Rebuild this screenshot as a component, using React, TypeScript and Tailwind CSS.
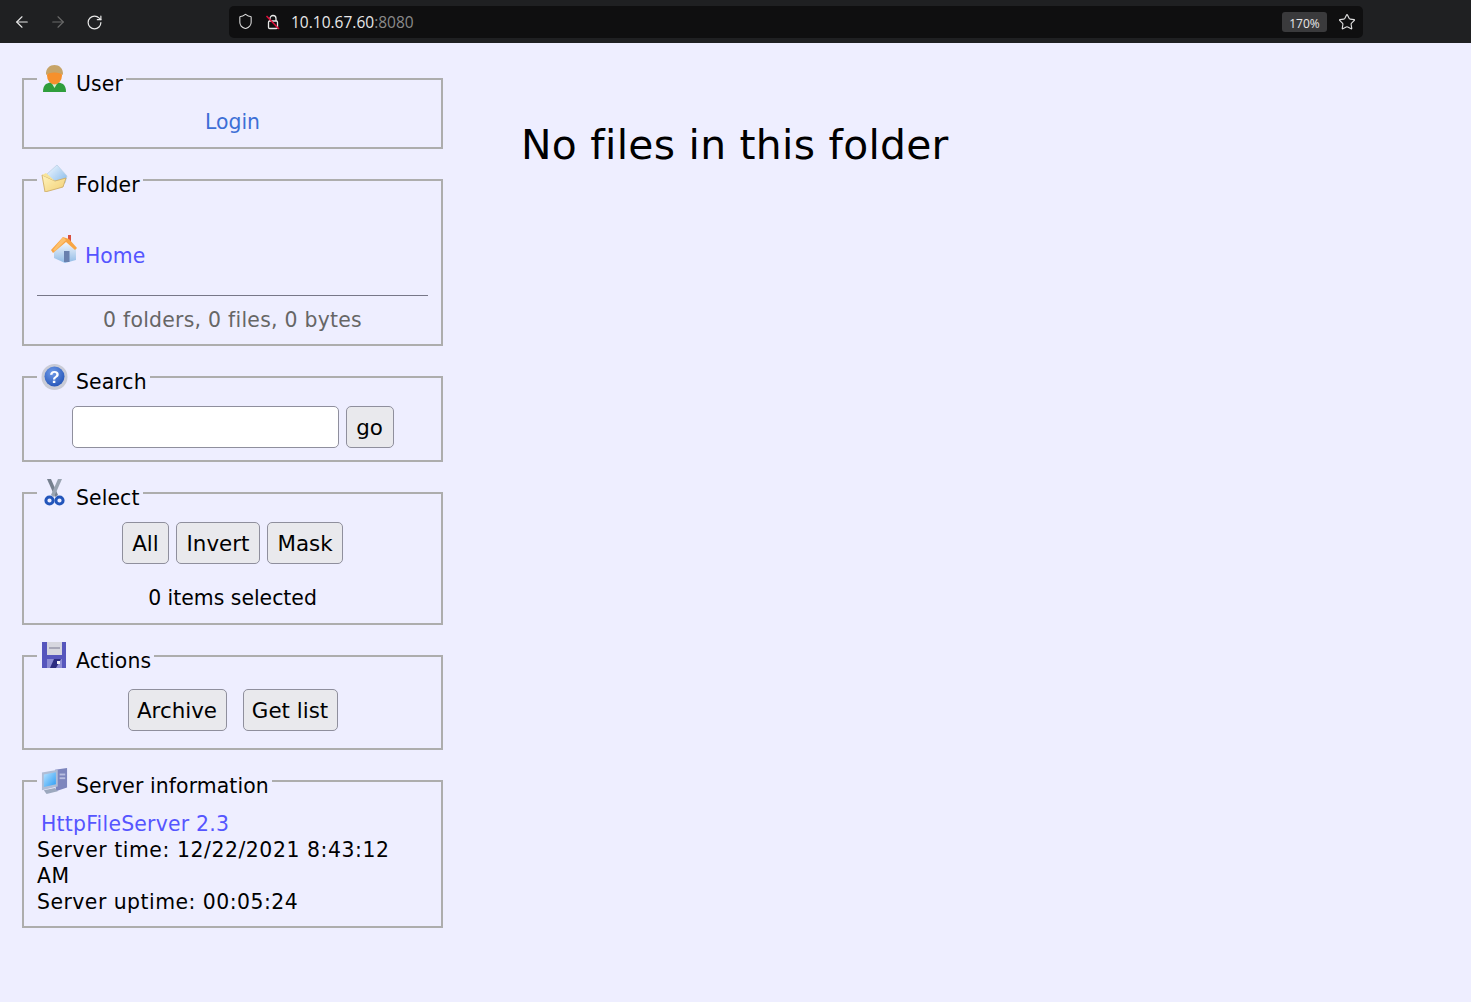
import type { PropsWithChildren, ReactNode } from "react"
import { ArrowLeft, ArrowRight, RotateCw, Shield, Star } from "lucide-react"

const UserIcon = () => (
  <svg width="27" height="28" viewBox="0 0 27 28" className="blur-[0.4px]">
    <path d="M2 27 C2 20 5 18.5 9 17.5 H18 C22 18.5 25 20 25 27 Z" fill="#2f9e3c" />
    <path d="M10 17 L13.5 23 L17 17 Z" fill="#d5ecd0" />
    <ellipse cx="13.5" cy="10.5" rx="7.5" ry="9" fill="#f6902c" />
    <path d="M5 10 C4.5 3 9 0 13.5 0 C18 0 22.5 3 22 10 C19 6.5 8 6.5 5 10 Z" fill="#c7a468" />
  </svg>
)

const FolderIcon = () => (
  <svg width="27" height="28" viewBox="0 0 27 28" className="mt-[-2px] blur-[0.4px]">
    <defs>
      <linearGradient id="folderBlue" x1="0" y1="0" x2="1" y2="1">
        <stop offset="0" stopColor="#f4f9ff" />
        <stop offset="1" stopColor="#7fb6ea" />
      </linearGradient>
      <linearGradient id="folderBody" x1="0" y1="0" x2="1" y2="1">
        <stop offset="0" stopColor="#fff4bd" />
        <stop offset="1" stopColor="#f2cf74" />
      </linearGradient>
    </defs>
    <path d="M6 10 L16 1 L26 12 L24 19 L10 21 Z" fill="url(#folderBlue)" stroke="#b7cde2" strokeWidth="0.7" />
    <path d="M1 11 L14 17 L25 14 L22 23 L4 28 Z" fill="url(#folderBody)" stroke="#cfae66" strokeWidth="0.9" />
    <path d="M1 11 L5 9 L14 17 Z" fill="#f8e49a" />
  </svg>
)

const HomeIcon = () => (
  <svg width="27" height="28" viewBox="0 0 27 28" className="blur-[0.4px]">
    <defs>
      <linearGradient id="homeWall" x1="0" y1="0" x2="0" y2="1">
        <stop offset="0" stopColor="#f4f7fc" />
        <stop offset="1" stopColor="#90bbe6" />
      </linearGradient>
    </defs>
    <rect x="17" y="0" width="3" height="8" fill="#d9503f" />
    <path d="M3 14 L15 7 L25 14 V25 L14 28 L3 23 Z" fill="url(#homeWall)" />
    <path d="M0 15 L12 2 L18 4 L26 13 L24 15 L15 7 L2 18 Z" fill="#f8a544" />
    <path d="M2 15 L12 2 L15 5 L4 16 Z" fill="#fdc06c" />
    <rect x="13" y="16" width="5.5" height="11" fill="#6980ad" />
  </svg>
)

const SearchIcon = () => (
  <svg width="27" height="28" viewBox="0 0 27 28" className="blur-[0.4px]">
    <defs>
      <radialGradient id="helpBall" cx="0.4" cy="0.3" r="0.8">
        <stop offset="0" stopColor="#6f9be8" />
        <stop offset="1" stopColor="#1f4fb4" />
      </radialGradient>
    </defs>
    <circle cx="13.5" cy="14" r="13" fill="#c9cbd6" />
    <circle cx="13.5" cy="13.5" r="10" fill="url(#helpBall)" />
    <text x="13.5" y="19.5" textAnchor="middle" fontSize="17" fontWeight="700" fill="#fff" fontFamily="'Liberation Sans', sans-serif">?</text>
  </svg>
)

const ScissorsIcon = () => (
  <svg width="27" height="28" viewBox="0 0 27 28" className="blur-[0.4px]">
    <path d="M6 0 L10 0 L17 16 L14 18 Z" fill="#76808f" />
    <path d="M21 0 L17 0 L10 16 L13 18 Z" fill="#9aa4b2" />
    <circle cx="8.5" cy="21.5" r="3.6" fill="none" stroke="#2255bb" strokeWidth="3" />
    <circle cx="18.5" cy="21.5" r="3.6" fill="none" stroke="#2255bb" strokeWidth="3" />
  </svg>
)

const SaveIcon = () => (
  <svg width="27" height="28" viewBox="0 0 27 28" className="mt-[-1px] blur-[0.4px]">
    <path d="M1 1 H25 V27 H1 Z" fill="#5656bd" />
    <rect x="6" y="1" width="15" height="13" fill="#d7d7df" />
    <rect x="8" y="6" width="11" height="2" fill="#a8a8b8" />
    <path d="M6 18 H21 V27 H6 Z" fill="#8d8dd4" />
    <path d="M9 27 L13 18 H20 L15 27 Z" fill="#2c2c80" />
    <rect x="16" y="20" width="3" height="3" fill="#f2f2f8" />
  </svg>
)

const ServerIcon = () => (
  <svg width="29" height="28" viewBox="0 0 29 28" className="blur-[0.4px]">
    <defs>
      <linearGradient id="serverScreen" x1="0" y1="0" x2="1" y2="1">
        <stop offset="0" stopColor="#b8e2ff" />
        <stop offset="1" stopColor="#2a9cf4" />
      </linearGradient>
    </defs>
    <path d="M15 2 L28 0 V21 L16 25 Z" fill="#7d85bd" />
    <rect x="20" y="6" width="6" height="2" fill="#b9bee0" />
    <rect x="20" y="10" width="6" height="2" fill="#b9bee0" />
    <path d="M1 5 L18 2 V20 L1 24 Z" fill="#b0bdd6" />
    <path d="M3 7 L16 4.5 V17.5 L3 20.5 Z" fill="url(#serverScreen)" />
    <path d="M3 24 L15 21.5 L18 25 L6 28 Z" fill="#9ca8be" />
  </svg>
)

const Panel = ({
  children,
  icon,
  pad,
  title,
}: PropsWithChildren<{ icon: ReactNode; pad: string; title: string }>) => (
  <fieldset className={`mb-[17px] w-[421px] border-2 border-solid border-[#adadad] px-[13px] ${pad}`}>
    <legend className="flex h-[28px] items-start pr-[3px]">
      <span className="ml-[4px] flex h-[28px] w-[27px] justify-center">{icon}</span>
      <span className="ml-[8px] mt-[6px] h-[26px] leading-[26px] tracking-[0.1px]">{title}</span>
    </legend>
    {children}
  </fieldset>
)

const Button = ({ children, width }: PropsWithChildren<{ width: string }>) => (
  <button className={`h-[42px] rounded-[5px] border border-[#8f8f9d] bg-[#e9e9ed] pt-[2px] text-[21.4px] leading-none text-black ${width}`}>
    {children}
  </button>
)

export default function App() {
  return (
    <div className="flex min-h-[1002px] flex-col bg-[#eeeeff] font-['DejaVu_Sans',sans-serif] text-[20.4px] leading-[26px] text-black">
      <header className="flex h-[43px] items-center bg-[#1f2022] pl-[13px] text-white">
        <ArrowLeft size={18} strokeWidth={1.5} className="mt-[1px] text-[#e8e8e8]" />
        <ArrowRight size={18} strokeWidth={1.5} className="ml-[18px] mt-[1px] text-[#6a6a6a]" />
        <RotateCw size={17} strokeWidth={1.7} className="ml-[19px] mt-[1px] text-[#e8e8e8]" />
        <div className="ml-[126px] flex h-[32px] w-[1134px] items-center rounded-[5px] bg-[#0f0f10] pl-[8px] pr-[7px] font-['Open_Sans',sans-serif]">
          <Shield size={17} strokeWidth={1.5} className="text-[#dcdcdc]" />
          <svg width="16" height="16" viewBox="0 0 16 16" className="ml-[11px]" fill="none">
            <path d="M5 7 V4.5 a3 3 0 0 1 6 0 V7" stroke="#e8e8e8" strokeWidth="1.3" />
            <rect x="3.5" y="7" width="9" height="7.5" rx="1.2" stroke="#e8e8e8" strokeWidth="1.3" />
            <path d="M1.5 2 L14 15" stroke="#e0103c" strokeWidth="1.5" />
          </svg>
          <span className="ml-[10px] text-[15.5px] text-[#e8e8e8]">
            10.10.67.60<span className="text-[#8a8a8a]">:8080</span>
          </span>
          <span className="ml-auto flex h-[20px] w-[45px] items-center justify-center rounded-[3px] bg-[#3a3a3c] pt-[4px] text-[12px] text-[#e8e8e8]">
            170%
          </span>
          <Star size={18} strokeWidth={1.5} className="ml-[11px] text-[#e0e0e0]" />
        </div>
      </header>
      <div className="flex">
        <aside className="ml-[22px] mt-[22px] w-[421px] shrink-0">
          <Panel icon={<UserIcon />} pad="pb-[12px]" title="User">
            <div className="pt-[16px] text-center">
              <a className="text-[#3d6fd6]">Login</a>
            </div>
          </Panel>
          <Panel icon={<FolderIcon />} pad="pb-[11px]" title="Folder">
            <div className="flex h-[87px] items-start pl-[14px] pt-[47px]">
              <span className="mt-[-6px] flex w-[27px] justify-center"><HomeIcon /></span>
              <a className="ml-[7px] mt-[2px] text-[#5555ff]">Home</a>
            </div>
            <div className="mt-[14px] border-t border-[#777788] pt-[11px] text-center tracking-[0.26px] text-[#666666]">
              0 folders, 0 files, 0 bytes
            </div>
          </Panel>
          <Panel icon={<SearchIcon />} pad="pb-[12px]" title="Search">
            <div className="flex justify-center gap-[7px] pt-[15px]">
              <input className="h-[42px] w-[267px] rounded-[5px] border border-[#8f8f9d] bg-white" />
              <Button width="w-[48px]">go</Button>
            </div>
          </Panel>
          <Panel icon={<ScissorsIcon />} pad="pb-[12px]" title="Select">
            <div className="flex justify-center gap-[7px] pt-[15px]">
              <Button width="w-[47px]">All</Button>
              <Button width="w-[84px]">Invert</Button>
              <Button width="w-[76px]">Mask</Button>
            </div>
            <div className="pt-[21px] text-center">0 items selected</div>
          </Panel>
          <Panel icon={<SaveIcon />} pad="pb-[17px]" title="Actions">
            <div className="flex justify-center gap-[16px] pt-[19px]">
              <Button width="w-[99px]">Archive</Button>
              <Button width="w-[95px]">Get list</Button>
            </div>
          </Panel>
          <Panel icon={<ServerIcon />} pad="pb-[11px]" title="Server information">
            <div className="pt-[16px]">
              <a className="ml-[4px] block tracking-[0.22px] text-[#5555ff]">HttpFileServer 2.3</a>
              <div className="tracking-[0.55px]">Server time: 12/22/2021 8:43:12 AM</div>
              <div className="tracking-[0.48px]">Server uptime: 00:05:24</div>
            </div>
          </Panel>
        </aside>
        <main className="ml-[79px] pt-[77px]">
          <h1 className="ml-[-1px] text-[40.8px] leading-[50px] tracking-[0.3px]">No files in this folder</h1>
        </main>
      </div>
    </div>
  )
}
